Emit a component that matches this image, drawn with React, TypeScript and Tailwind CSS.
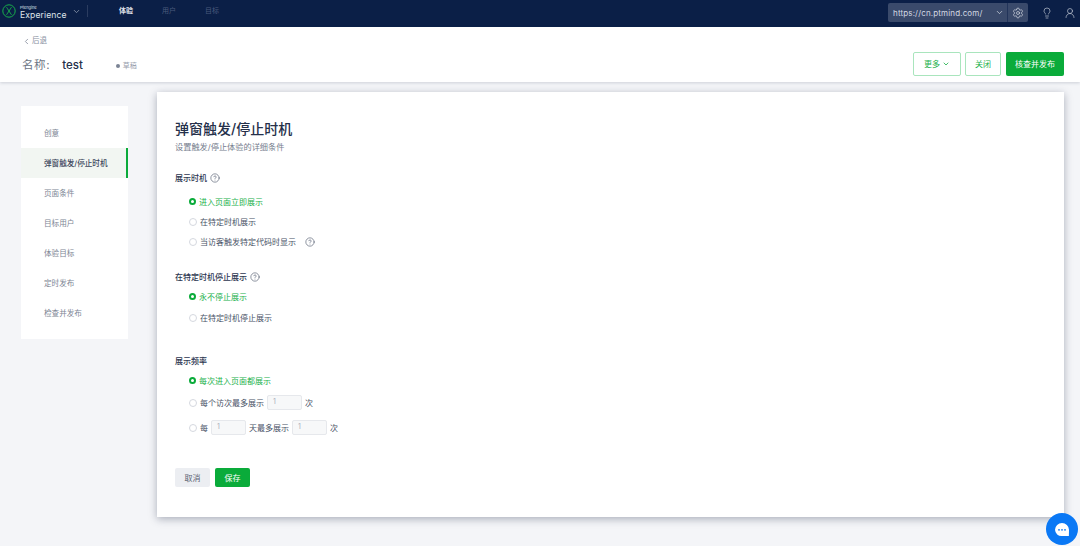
import type { ReactNode } from 'react';
import { ChevronDown, ChevronLeft, CircleHelp, Lightbulb, Settings, UserRound } from 'lucide-react';

const cjk = "font-['Inter','Noto_Sans_CJK_SC',sans-serif]";

const menuItems = ['创意', '弹窗触发/停止时机', '页面条件', '目标用户', '体验目标', '定时发布', '检查并发布'];

function Radio({ checked }: { checked?: boolean }) {
  if (checked) {
    return <span className="w-[3px] h-[3px] box-content rounded-full border-[2.5px] border-[#0aab3a] bg-white shrink-0" />;
  }
  return <span className="w-[6px] h-[6px] box-content rounded-full border border-[#d5d8df] bg-white shrink-0" />;
}

function Help({ size = 10 }: { size?: number }) {
  return <CircleHelp size={size} strokeWidth={1.4} className="text-[#3f4a5e] shrink-0" />;
}

function NumInput() {
  return (
    <span className="w-[35px] h-[15px] mx-[3px] flex items-center pl-[5px] rounded-[2px] border border-[#e6e8ec] bg-[#f7f8f9] text-[7px] text-[#a9afba]">
      1
    </span>
  );
}

function Option({ checked, children, className }: { checked?: boolean; children: ReactNode; className?: string }) {
  return (
    <div className={`flex items-center h-[15px] pl-[14px] gap-[3px] text-[8px] ${checked ? 'text-[#22b14c]' : 'text-[#485266]'} ${className ?? ''}`}>
      <Radio checked={checked} />
      <span className="flex items-center">{children}</span>
    </div>
  );
}

export default function App() {
  return (
    <div className={`${cjk} relative w-[1080px] h-[546px] overflow-hidden bg-[#f4f5f8]`}>
      <header className="h-[27px] bg-[#0b1f47] flex items-center pb-[5px]">
        <div className="flex items-center pl-[2px] w-[88px] border-r border-[#2b3c60] h-[12px]">
          <svg width="14" height="14" viewBox="0 0 14 14" fill="none" className="shrink-0">
            <circle cx="7" cy="7" r="6.2" stroke="#18b04b" strokeWidth="1" />
            <path d="M4.5 3.2c1.2 1.6 3.8 6 5 7.6M9.5 3.2c-1.2 1.6-3.8 6-5 7.6" stroke="#18b04b" strokeWidth="0.9" />
          </svg>
          <div className="ml-[4px] flex flex-col leading-none text-[#dfe3ea] mt-[3px]">
            <span className="text-[4px] h-[5px]">Ptengine</span>
            <span className="text-[8.6px] tracking-[0.1px]">Experience</span>
          </div>
          <ChevronDown size={9} className="ml-[5px] text-[#9aa4b8]" />
        </div>
        <nav className="flex ml-[31px] mt-[1px] gap-[29px] text-[7px]">
          <span className="text-[#e4e7ee] font-bold">体验</span>
          <span className="text-[#4a5a7c]">用户</span>
          <span className="text-[#4a5a7c]">目标</span>
        </nav>
        <div className="ml-auto flex items-center mt-[3px]">
          <div className="flex items-center w-[140px] h-[19px] rounded-[2px] bg-[#3a4a6b] text-[8px] text-[#d4d9e2]">
            <span className="pl-[5px] flex-1 tracking-[0.15px]">https://cn.ptmind.com/</span>
            <ChevronDown size={9} className="mr-[3px] text-[#cfd5df]" />
            <span className="w-[21px] h-full border-l border-[#22345a] flex items-center justify-center">
              <Settings size={12} strokeWidth={1.4} className="text-[#d4d9e2]" />
            </span>
          </div>
          <Lightbulb size={12} strokeWidth={1.3} className="ml-[13px] text-[#c9cfda]" />
          <UserRound size={12} strokeWidth={1.3} className="ml-[11px] mr-[4px] text-[#c9cfda]" />
        </div>
      </header>

      <div className="relative h-[55px] bg-white shadow-[0_1px_3px_rgba(30,40,70,0.18)] px-[22px]">
        <div className="flex items-center h-[14px] pt-[7px] box-content text-[7.5px] text-[#8b93a3]">
          <ChevronLeft size={9} className="text-[#7b8394] mr-[1px]" />
          后退
        </div>
        <div className="flex items-center mt-[10px] h-[16px]">
          <span className="text-[11.5px] text-[#6c7484] tracking-[0.6px]">名称:</span>
          <span className="ml-[12px] text-[11.5px] font-medium text-[#25304a]">test</span>
          <span className="ml-[33px] w-1 h-1 rounded-full bg-[#7b8394]" />
          <span className="ml-[3px] text-[7px] text-[#9aa1ae]">草稿</span>
        </div>
        <div className="absolute right-[16px] top-[25px] flex items-center gap-[4px] text-[8px]">
          <span className="flex items-center justify-center gap-[2px] w-[48px] h-[24px] rounded-[2px] border border-[#a9e5bd] text-[#22b14c]">
            更多 <ChevronDown size={8} strokeWidth={2.5} />
          </span>
          <span className="flex items-center justify-center w-[36px] h-[24px] rounded-[2px] border border-[#a9e5bd] text-[#22b14c]">关闭</span>
          <span className="flex items-center justify-center w-[58px] h-[24px] rounded-[2px] bg-[#0aab3a] text-white ml-[1px]">核查并发布</span>
        </div>
      </div>

      <main className="flex items-start pl-[21px] pr-[16px]">
        <aside className="w-[107px] mt-[24px] h-[233px] bg-white py-[12px] shrink-0">
          {menuItems.map((label, i) => (
            <div
              key={label}
              className={`h-[30px] flex items-center pl-[23px] pt-[1px] text-[7.6px] ${i === 1 ? 'bg-[#f2f6f2] border-r-[2px] border-[#0aab3a] text-[#3d475c] font-medium' : 'text-[#7d8594]'}`}
            >
              {label}
            </div>
          ))}
        </aside>

        <section className="ml-[29px] mt-[10px] flex-1 h-[425px] bg-white shadow-[0_2px_8px_rgba(30,40,70,0.35)] pl-[18px] pt-[28px]">
          <h1 className="text-[14px] leading-[18px] font-medium text-[#25304a]">弹窗触发/停止时机</h1>
          <p className="mt-[4px] text-[8.2px] leading-[11px] text-[#757d8d]">设置触发/停止体验的详细条件</p>

          <div className="mt-[19px] flex items-center gap-[3px] h-[12px] text-[8px] font-medium text-[#2c3650]">
            展示时机 <Help />
          </div>
          <div className="mt-[10px] flex flex-col gap-[5px]">
            <Option checked>进入页面立即展示</Option>
            <Option>在特定时机展示</Option>
            <Option>
              当访客触发特定代码时显示
              <span className="ml-[9px]"><Help /></span>
            </Option>
          </div>

          <div className="mt-[22px] flex items-center gap-[3px] h-[12px] text-[8px] font-medium text-[#2c3650]">
            在特定时机停止展示 <Help />
          </div>
          <div className="mt-[6px] flex flex-col gap-[6px]">
            <Option checked>永不停止展示</Option>
            <Option>在特定时机停止展示</Option>
          </div>

          <div className="mt-[30px] h-[12px] flex items-center text-[8px] font-medium text-[#2c3650]">展示频率</div>
          <div className="mt-[6px] flex flex-col gap-[7px]">
            <Option checked>每次进入页面都展示</Option>
            <Option>
              每个访次最多展示
              <NumInput />
              次
            </Option>
            <Option className="mt-[3px]">
              每
              <NumInput />
              天最多展示
              <NumInput />
              次
            </Option>
          </div>

          <div className="mt-[33px] flex gap-[5px] text-[8px]">
            <span className="w-[35px] h-[19px] flex items-center justify-center rounded-[2px] bg-[#eceef2] text-[#5b6474]">取消</span>
            <span className="w-[35px] h-[19px] flex items-center justify-center rounded-[2px] bg-[#0aab3a] text-white">保存</span>
          </div>
        </section>
      </main>

      <div className="absolute left-[1046px] top-[513px] w-[32px] h-[32px] rounded-full bg-[#0a78f5] flex items-center justify-center">
        <svg width="16" height="15" viewBox="0 0 16 15">
          <path d="M8 1a7 7 0 0 1 7 6.8c0 2.5-.1 5.2-.1 6.2H8A6.5 6.5 0 0 1 1 7.8 7 7 0 0 1 8 1z" fill="#fff" />
          <circle cx="5" cy="7.8" r="0.9" fill="#0a78f5" />
          <circle cx="8" cy="7.8" r="0.9" fill="#0a78f5" />
          <circle cx="11" cy="7.8" r="0.9" fill="#0a78f5" />
        </svg>
      </div>
    </div>
  );
}
